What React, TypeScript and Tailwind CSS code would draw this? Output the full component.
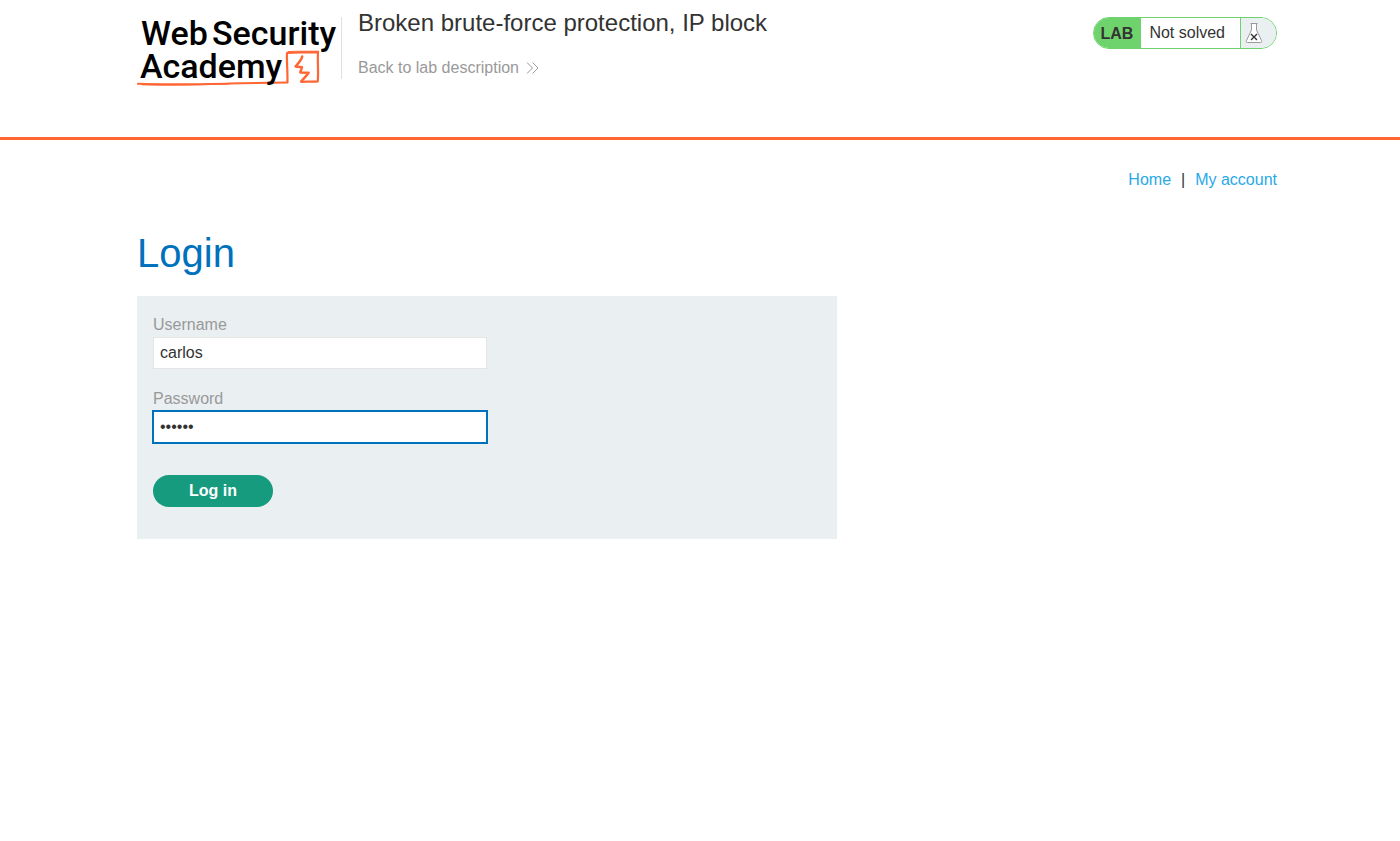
function AcademyLogo() {
  return (
    <svg viewBox="0 0 204 76" className="h-[76px] w-[204px]" role="img" aria-label="Web Security Academy">
      <g fill="none" stroke="#ff6633" strokeLinejoin="round" strokeLinecap="round">
        <path d="M1 72.8 C30 73.8 60 73.2 92 72.6 C112 72.1 130 72 150.4 71.4" strokeWidth="2" />
        <path d="M5 73.8 C35 74.8 60 73.8 92 73" strokeWidth="1" />
        <path d="M150.4 71.2 C150.8 62 149.6 51 150 42 C160 41.4 170 41.2 181 41.2 C180.4 50 181.6 59 180.8 70.4 C176 71 170 70.2 164.5 70.8" strokeWidth="2.2" />
        <path d="M151 40.6 C161 40 171 40.4 181.6 40.2" strokeWidth="1" />
        <path d="M165.2 45.5 C164.6 49 161.5 52 158.6 55.4 L165 56.2 L163.3 61.4 L171.6 61.8 C169.5 64.8 167 67.5 164.2 70.4" strokeWidth="2.5" />
      </g>
      <g fontFamily="Roboto, sans-serif" fontWeight="500" fontSize="34" fill="#000">
        <text x="4" y="34">Web</text>
        <text x="75" y="34">Security</text>
        <text x="3" y="67">Academy</text>
      </g>
    </svg>
  );
}

function DoubleChevron() {
  return (
    <svg viewBox="0 0 14 14" className="h-3.5 w-3.5" fill="none" stroke="#999" strokeWidth="1" aria-hidden="true">
      <path d="M1 1.5 L6.5 7 L1 12.5 M6.5 1.5 L12 7 L6.5 12.5" />
    </svg>
  );
}

function Flask() {
  return (
    <svg viewBox="0 0 18 22" className="h-[22px] w-[18px]" fill="none" aria-hidden="true">
      <path
        d="M6.5 1.5 V8 L1.4 18.8 C1 20 1.4 20.5 2.4 20.5 H15.6 C16.6 20.5 17 20 16.6 18.8 L11.5 8 V1.5 Z"
        fill="#fff"
      />
      <path
        d="M5.5 1.5 H12.5 M6.5 1.5 V8 L1.4 18.8 C1 20 1.4 20.5 2.4 20.5 H15.6 C16.6 20.5 17 20 16.6 18.8 L11.5 8 V1.5"
        stroke="#999"
        strokeWidth="1"
      />
      <path d="M6 12 L12 18 M12 12 L6 18" stroke="#333" strokeWidth="1.4" />
    </svg>
  );
}

export default function App() {
  return (
    <div className="min-h-screen bg-white font-['Liberation_Sans',Arial,sans-serif] text-base text-[#333332]">
      <header className="border-b-[3px] border-[#ff6633] pr-[123px] pb-[50px] pl-[137px]">
        <div className="flex items-start pt-[11px]">
          <a href="#academy" className="block shrink-0">
            <AcademyLogo />
          </a>
          <div className="mt-1.5 h-[62px] w-px shrink-0 bg-[#e0e0e0]" />
          <div className="-mt-1 flex grow flex-col items-start gap-[17px] pl-4">
            <h2 className="text-2xl">Broken brute-force protection, IP block</h2>
            <a href="#description" className="flex items-center gap-[7px] leading-6 text-[#999]">
              Back to lab description
              <DoubleChevron />
            </a>
          </div>
          <div className="mt-1.5 flex h-8 shrink-0 overflow-hidden rounded-2xl border border-[#6dd26b] bg-white leading-[30px]">
            <span className="bg-[#6fd36d] pr-2 pl-[7px] pt-px font-bold">LAB</span>
            <p className="pr-[15px] pl-2">Not solved</p>
            <span className="flex w-9 items-center border-l border-[#6dd26b] bg-[#eaeff2] pl-1">
              <Flask />
            </span>
          </div>
        </div>
      </header>

      <main className="pr-[123px] pl-[137px]">
        <nav className="flex justify-end gap-2.5 pt-7 leading-6">
          <a href="#home" className="text-[#29a9e8]">Home</a>
          <span>|</span>
          <a href="#account" className="text-[#29a9e8]">My account</a>
        </nav>

        <h1 className="mt-9 text-[40px] leading-[50px] text-[#0071bc]">Login</h1>

        <form
          className="mt-[18px] max-w-[700px] bg-[#eaeff2] px-4 pt-4 pb-8"
          onSubmit={(event) => event.preventDefault()}
        >
          <div className="flex max-w-[334px] flex-col">
            <label htmlFor="username" className="leading-[25px] text-[#999]">Username</label>
            <input
              id="username"
              name="username"
              type="text"
              defaultValue="carlos"
              className="h-8 border border-[#e5e5e5] bg-white px-1.5 outline-none"
            />
            <label htmlFor="password" className="mt-[17px] leading-[25px] text-[#999]">Password</label>
            <input
              id="password"
              name="password"
              type="password"
              defaultValue="secret"
              className="h-8 border border-[#0071bc] bg-white px-1.5 ring-1 ring-[#0071bc] outline-none"
            />
          </div>
          <button type="submit" className="mt-8 h-8 w-[120px] rounded-full bg-[#169b7f] font-bold text-white">
            Log in
          </button>
        </form>
      </main>
    </div>
  );
}
